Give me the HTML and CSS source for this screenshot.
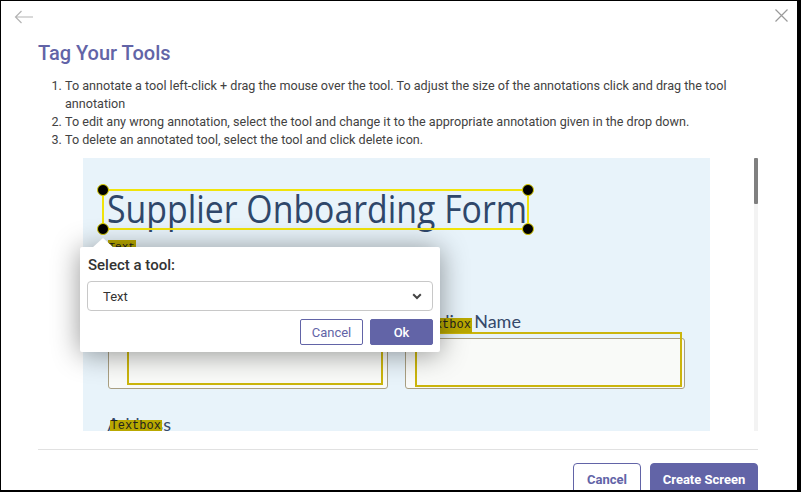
FILE: index.html
```
<!DOCTYPE html>
<html>
<head>
<meta charset="utf-8">
<link rel="stylesheet" href="styles.css">
</head>
<body>
<div class="dialog">
  <div class="topbar">
    <svg class="back" width="20" height="14" viewBox="0 0 20 14"><path d="M19 7H1.5M7.5 1L1.5 7l6 6" fill="none" stroke="#b4b4b4" stroke-width="1.2"/></svg>
    <svg class="close" width="13" height="13" viewBox="0 0 13 13"><path d="M0.5 0.5l12 12M12.5 0.5l-12 12" fill="none" stroke="#9a9a9a" stroke-width="1.2"/></svg>
  </div>
  <div class="content">
    <h1 class="title">Tag Your Tools</h1>
    <ol class="steps">
      <li>To annotate a tool left-click + drag the mouse over the tool. To adjust the size of the annotations click and drag the tool annotation</li>
      <li>To edit any wrong annotation, select the tool and change it to the appropriate annotation given in the drop down.</li>
      <li>To delete an annotated tool, select the tool and click delete icon.</li>
    </ol>
    <div class="canvas-row">
      <div class="canvas-area">
        <div class="shot">
          <div class="form-title">Supplier Onboarding Form</div>
          <div class="anno anno-title">
            <span class="handle h-tl"></span><span class="handle h-tr"></span>
            <span class="handle h-bl"></span><span class="handle h-br"></span>
          </div>
          <span class="tag tag-title">Text</span>

          <div class="field-label label-right">Supplier Name</div>
          <div class="input-box box-left"></div>
          <div class="anno-field af-left"></div>
          <div class="input-box box-right"></div>
          <div class="anno-field af-right"></div>
          <span class="tag tag-right">Textbox</span>

          <div class="field-label label-addr">Address</div>
          <span class="tag tag-addr">Textbox</span>
        </div>
        <div class="popup">
          <div class="popup-arrow"></div>
          <div class="popup-label">Select a tool:</div>
          <div class="select">
            <span>Text</span>
            <svg width="10" height="7" viewBox="0 0 10 7"><path d="M1.2 1.3L5 5l3.8-3.7" fill="none" stroke="#444" stroke-width="2"/></svg>
          </div>
          <div class="popup-actions">
            <button class="btn btn-outline btn-sm">Cancel</button>
            <button class="btn btn-fill btn-sm">Ok</button>
          </div>
        </div>
      </div>
      <div class="scrollbar"><div class="thumb"></div></div>
    </div>
    <div class="divider"></div>
    <div class="footer">
      <button class="btn btn-outline btn-lg cancel">Cancel</button>
      <button class="btn btn-fill btn-lg">Create Screen</button>
    </div>
  </div>
</div>
</body>
</html>
```
FILE: styles.css
```
* { box-sizing: border-box; }
html, body { margin: 0; padding: 0; background: #fff; }
body { font-family: Roboto, "Liberation Sans", sans-serif; }

.dialog {
  width: 801px;
  height: 492px;
  border-style: solid;
  border-color: #000;
  border-width: 1px 4px 2px 1px;
  overflow: hidden;
  position: relative;
  background: #fff;
}

.topbar {
  height: 40px;
  display: flex;
  justify-content: space-between;
  align-items: flex-start;
  padding: 0 9px 0 13px;
}
.back { margin-top: 9px; }
.close { margin-top: 8px; }

.content { padding: 0 39px 0 37px; }

.title {
  margin: 0;
  font-size: 20px;
  line-height: 24px;
  font-weight: 500;
  color: #6264a7;
}

.steps {
  margin: 12px 0 9px;
  padding-left: 27px;
  font-size: 12.6px;
  line-height: 18px;
  color: #424242;
}

.canvas-row {
  display: flex;
  height: 273px;
}
.canvas-area {
  flex: 1;
  position: relative;
  display: flex;
  justify-content: center;
}
.scrollbar {
  width: 4px;
  background: #f3f3f3;
}
.thumb { height: 46px; background: #808080; border-radius: 1px; }

.shot {
  width: 627px;
  height: 273px;
  background: #e8f3fa;
  position: relative;
  overflow: hidden;
}

.form-title {
  position: absolute;
  left: 24px;
  top: 24px;
  font-family: "Open Sans", sans-serif;
  font-size: 38px;
  line-height: 52px;
  color: #2f476a;
  white-space: nowrap;
  transform-origin: 0 0;
  transform: scaleX(0.89);
}
.anno {
  position: absolute;
  border: 2px solid #f1e40a;
}
.anno-title { left: 19px; top: 31px; width: 427px; height: 41px; }
.handle {
  position: absolute;
  width: 12px; height: 12px;
  border-radius: 50%;
  background: #000;
  border: 1px solid #d8cc00;
}
.h-tl { left: -7px; top: -7px; }
.h-tr { right: -7px; top: -7px; }
.h-bl { left: -7px; bottom: -7px; }
.h-br { right: -7px; bottom: -7px; }

.tag {
  position: absolute;
  background: #b9a800;
  color: #1f1f1f;
  font-family: "Liberation Mono", monospace;
  font-size: 11px;
  line-height: 14px;
  padding: 0 1px;
}
.tag-title { left: 25px; top: 82px; }
.tag-right { left: 337px; top: 160px; line-height: 15px; font-size: 12px; }
.tag-addr { left: 27px; top: 262px; line-height: 13px; font-size: 12px; }

.field-label {
  position: absolute;
  font-family: Lato, sans-serif;
  font-size: 18px;
  line-height: 22px;
  color: #35496a;
}
.label-right { left: 323px; top: 152px; }
.label-addr { left: 25px; top: 255px; }

.input-box {
  position: absolute;
  top: 180px;
  height: 51px;
  border: 1px solid #a99f82;
  border-radius: 3px;
  background: #f9faf8;
}
.box-left { left: 25px; width: 280px; }
.box-right { left: 322px; width: 280px; }
.anno-field {
  position: absolute;
  top: 174px;
  height: 55px;
  border: 2px solid #cbb50c;
}
.af-left { left: 44px; width: 256px; height: 53px; }
.af-right { left: 332px; width: 267px; }

.popup {
  position: absolute;
  left: 42px;
  top: 89px;
  width: 360px;
  height: 105px;
  background: #fff;
  border-radius: 2px;
  box-shadow: 0 2px 28px rgba(0, 0, 0, 0.42);
  padding: 8px 7px 0 7px;
}
.popup-arrow {
  position: absolute;
  left: 12px;
  top: -9px;
  width: 0; height: 0;
  border-left: 11px solid transparent;
  border-right: 11px solid transparent;
  border-bottom: 10px solid #fff;
}
.popup-label {
  font-size: 15px;
  line-height: 20px;
  font-weight: 500;
  color: #333;
  margin: 0 0 6px 1px;
}
.select {
  height: 30px;
  border: 1px solid #c8c8c8;
  border-radius: 4px;
  display: flex;
  align-items: center;
  justify-content: space-between;
  padding: 0 10px 0 15px;
  font-size: 13px;
  color: #333;
}
.popup-actions {
  display: flex;
  justify-content: flex-end;
  gap: 7px;
  margin-top: 8px;
  padding-right: 0;
}

.btn {
  font-family: Roboto, sans-serif;
  border-radius: 2px;
  cursor: pointer;
  padding: 0;
}
.btn-outline { background: #fff; border: 1px solid #6264a7; color: #6264a7; }
.btn-fill { background: #6264a7; border: 1px solid #6264a7; color: #fff; }
.btn-sm { width: 63px; height: 26px; font-size: 13px; }
.btn-sm.btn-fill { font-weight: 500; }

.divider {
  margin-top: 18px;
  height: 1px;
  background: #e1e1e1;
}
.footer {
  display: flex;
  justify-content: flex-end;
  gap: 9px;
  margin-top: 13px;
}
.btn-lg {
  height: 32px;
  font-size: 13px;
  font-weight: 700;
  border-radius: 4px;
}
.btn-lg.cancel { width: 68px; }
.btn-lg.btn-fill { width: 108px; }
```
